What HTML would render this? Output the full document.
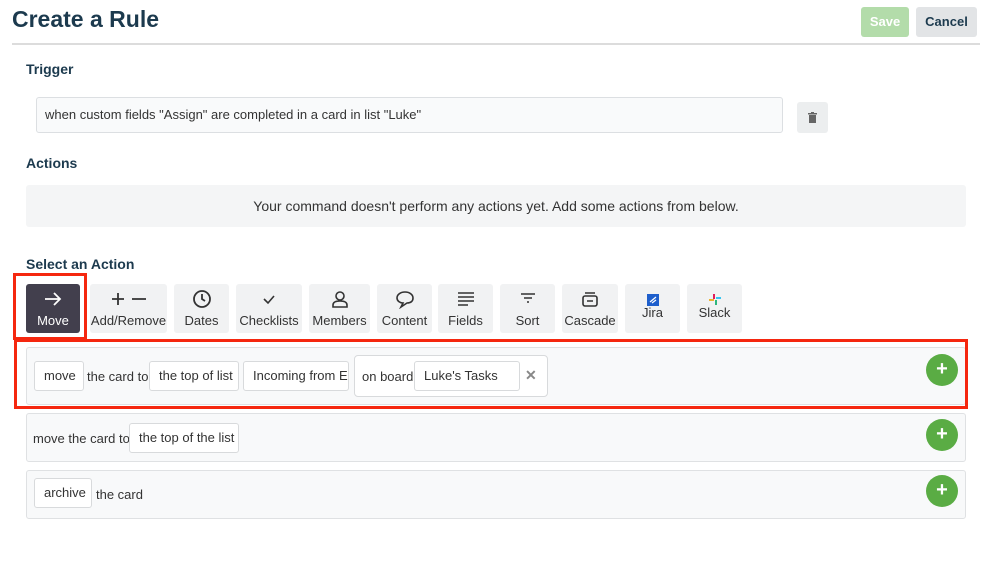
<!DOCTYPE html>
<html><head><meta charset="utf-8"><style>
*{box-sizing:border-box;margin:0;padding:0}
body{width:998px;height:561px;background:#fff;font-family:"Liberation Sans",sans-serif;color:#333;position:relative;overflow:hidden}
.a{position:absolute}
h1{position:absolute;left:12px;top:6px;font-size:23px;color:#1c3a4e;font-weight:bold}
.h{position:absolute;left:26px;font-size:14px;font-weight:bold;color:#1c3a4e}
.btn{position:absolute;top:284px;height:49px;background:#f1f2f3;border-radius:3px;font-size:13px;color:#333;text-align:center}
.btn .l{position:absolute;left:0;right:0;bottom:5px}
.btn svg{position:absolute;left:50%;top:5px;transform:translateX(-50%)}
.chip{position:absolute;height:30px;background:#fff;border:1px solid #d8dadc;border-radius:3px;font-size:13px;line-height:28px;padding:0 9px;white-space:nowrap;overflow:hidden}
.t{position:absolute;font-size:13px}
.row{position:absolute;left:26px;width:940px;background:#f8f9fa;border:1px solid #dfe1e3;border-radius:3px}
.plus{position:absolute;left:926px;width:32px;height:32px;border-radius:50%;background:#5aac44;color:#fff;font-weight:bold;font-size:20px;text-align:center;line-height:31px}
</style></head><body>
<h1>Create a Rule</h1>
<div class="a" style="left:861px;top:7px;width:48px;height:30px;background:#b3dcaa;border-radius:3px;color:#fff;font-weight:bold;font-size:13px;text-align:center;line-height:30px">Save</div>
<div class="a" style="left:916px;top:7px;width:61px;height:30px;background:#e2e4e6;border-radius:3px;color:#1c3a4e;font-weight:bold;font-size:13px;text-align:center;line-height:30px">Cancel</div>
<div class="a" style="left:12px;top:43px;width:968px;height:2px;background:#dcdcdc"></div>
<div class="h" style="top:61px">Trigger</div>
<div class="a" style="left:36px;top:97px;width:747px;height:36px;background:#f9fafb;border:1px solid #dcdfe2;border-radius:3px;font-size:13px;line-height:34px;padding-left:8px">when custom fields "Assign" are completed in a card in list "Luke"</div>
<div class="a" style="left:797px;top:102px;width:31px;height:31px;background:#eceeef;border-radius:3px"><svg width="31" height="31"><rect x="12" y="13" width="7" height="8" fill="#666"/><rect x="11" y="11" width="9" height="1.5" fill="#666"/><rect x="14" y="10" width="3" height="1.5" fill="#666"/></svg></div>
<div class="h" style="top:155px">Actions</div>
<div class="a" style="left:26px;top:185px;width:940px;height:42px;background:#f4f5f6;border-radius:3px;font-size:14px;line-height:42px;text-align:center;color:#333">Your command doesn't perform any actions yet. Add some actions from below.</div>
<div class="h" style="top:256px">Select an Action</div>

<div class="btn" style="left:26px;width:54px;background:#423f4d;color:#fff"><svg width="20" height="20" viewBox="0 0 20 20"><path d="M2 10H17M11 4L17 10L11 16" stroke="#fff" stroke-width="1.8" fill="none"/></svg><div class="l">Move</div></div>
<div class="a" style="left:13px;top:273px;width:74px;height:67px;border:3px solid #f5270f"></div>
<div class="btn" style="left:90px;width:77px"><svg width="40" height="20"><path d="M3 10H15M9 4V16M23 10H37" stroke="#333" stroke-width="1.8"/></svg><div class="l">Add/Remove</div></div>
<div class="btn" style="left:174px;width:55px"><svg width="20" height="20"><circle cx="10" cy="10" r="8" stroke="#333" stroke-width="1.8" fill="none"/><path d="M10 5V10L13 12" stroke="#333" stroke-width="1.8" fill="none"/></svg><div class="l">Dates</div></div>
<div class="btn" style="left:236px;width:66px"><svg width="20" height="20"><path d="M5 10L9 14L15 7" stroke="#333" stroke-width="1.6" fill="none"/></svg><div class="l">Checklists</div></div>
<div class="btn" style="left:309px;width:61px"><svg width="20" height="20"><circle cx="10" cy="7" r="4" stroke="#333" stroke-width="1.6" fill="none"/><path d="M3 18V16Q3 12 10 12Q17 12 17 16V18Z" stroke="#333" stroke-width="1.6" fill="none"/></svg><div class="l">Members</div></div>
<div class="btn" style="left:377px;width:55px"><svg width="20" height="20"><path d="M10 3C5 3 2 6 2 9C2 12 5 14 8 14L6 18L12 14C16 14 18 12 18 9C18 6 15 3 10 3Z" stroke="#333" stroke-width="1.6" fill="none"/></svg><div class="l">Content</div></div>
<div class="btn" style="left:438px;width:55px"><svg width="20" height="20"><path d="M2 4H18M2 8H18M2 12H18M2 16H12" stroke="#333" stroke-width="1.6"/></svg><div class="l">Fields</div></div>
<div class="btn" style="left:500px;width:55px"><svg width="20" height="20"><path d="M3 5H17M6 9H14M9 13H11" stroke="#333" stroke-width="1.6"/></svg><div class="l">Sort</div></div>
<div class="btn" style="left:562px;width:56px"><svg width="20" height="20"><rect x="3" y="7" width="14" height="10" rx="2" stroke="#333" stroke-width="1.6" fill="none"/><path d="M5 4H15M7 12H13" stroke="#333" stroke-width="1.6"/></svg><div class="l">Cascade</div></div>
<div class="btn" style="left:625px;width:55px"><svg width="20" height="20"><rect x="4" y="5" width="12" height="12" fill="#1e5fcc"/><path d="M7 13L13 8M9 14L13 11" stroke="#fff" stroke-width="1.2"/></svg><div class="l" style="bottom:13px">Jira</div></div>
<div class="btn" style="left:687px;width:55px"><svg width="20" height="20"><rect x="8" y="5" width="2" height="5" fill="#e01e5a"/><rect x="11" y="8" width="5" height="2" fill="#36c5f0"/><rect x="10" y="11" width="2" height="5" fill="#2eb67d"/><rect x="4" y="10" width="5" height="2" fill="#ecb22e"/></svg><div class="l" style="bottom:13px">Slack</div></div>

<div class="row" style="top:347px;height:58px"></div>
<div class="a" style="left:14px;top:339px;width:954px;height:70px;border:3px solid #f5270f"></div>
<div class="chip" style="left:34px;top:361px;width:50px">move</div>
<div class="t" style="left:87px;top:369px">the card to</div>
<div class="chip" style="left:149px;top:361px;width:90px">the top of list</div>
<div class="chip" style="left:243px;top:361px;width:106px">Incoming from E</div>
<div class="a" style="left:354px;top:355px;width:194px;height:42px;background:#fff;border:1px solid #d8dadc;border-radius:4px"></div>
<div class="t" style="left:362px;top:369px">on board</div>
<div class="chip" style="left:414px;top:361px;width:106px">Luke's Tasks</div>
<div class="t" style="left:525px;top:367px;color:#888;font-size:14px;font-weight:bold">✕</div>
<div class="plus" style="top:354px">+</div>

<div class="row" style="top:413px;height:49px"></div>
<div class="t" style="left:33px;top:431px">move the card to</div>
<div class="chip" style="left:129px;top:423px;width:110px">the top of the list</div>
<div class="plus" style="top:419px">+</div>

<div class="row" style="top:470px;height:49px"></div>
<div class="chip" style="left:34px;top:478px;width:58px">archive</div>
<div class="t" style="left:96px;top:487px">the card</div>
<div class="plus" style="top:475px">+</div>
</body></html>
